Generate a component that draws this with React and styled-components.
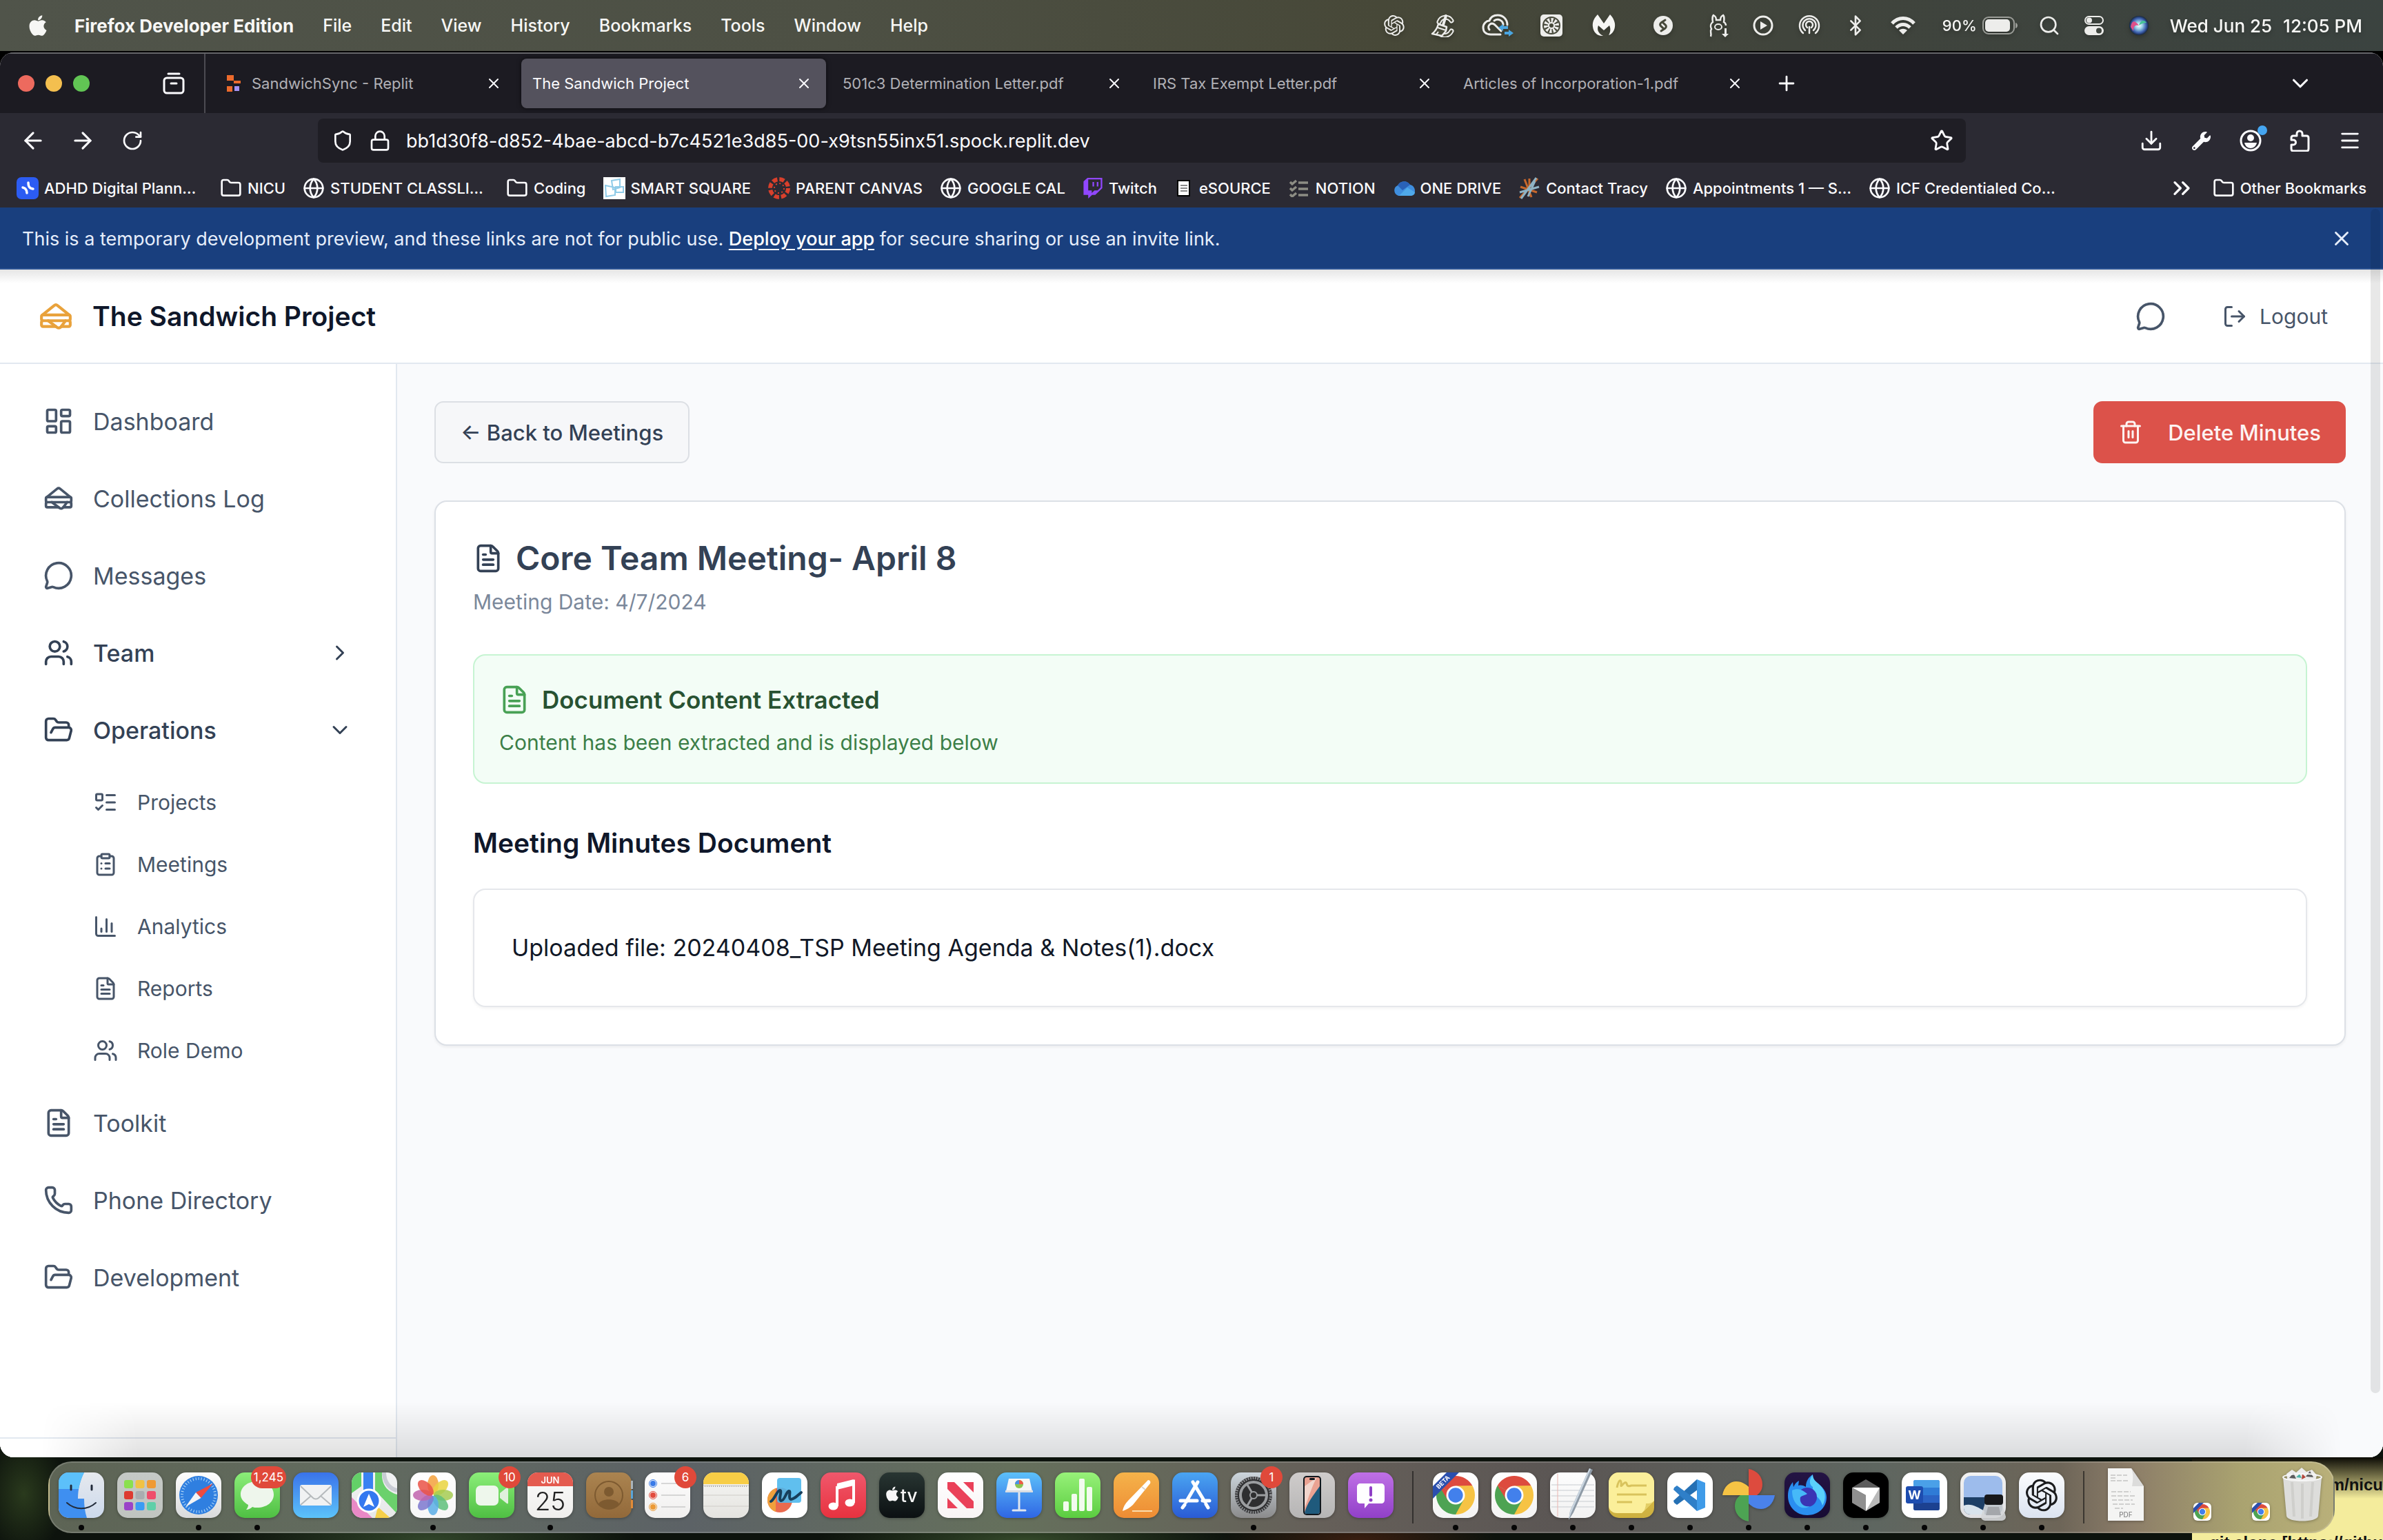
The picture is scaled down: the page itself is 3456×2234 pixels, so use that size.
import React from "react";
import styled, { createGlobalStyle, css } from "styled-components";
import {
  LayoutDashboard, Sandwich, MessageCircle, Users, FolderOpen, ListTodo, ClipboardList,
  ChartColumn, FileText, Phone, ChevronRight, ChevronDown, ChevronsRight, LogOut, Trash2,
  ArrowLeft, ArrowRight, RotateCw, Shield, Lock, Star, Download, Menu, Folder, Globe, X, Plus,
  Search, Bluetooth,
} from "lucide-react";
import { FaApple, FaTwitch, FaWrench } from "react-icons/fa";
import { RiOpenaiFill } from "react-icons/ri";

const Global = createGlobalStyle`
  *, *::before, *::after { box-sizing: border-box; }
  html, body, #root { height: 100%; margin: 0; }
  body {
    font-family: Inter, "Liberation Sans", sans-serif;
    background: #000;
    overflow: hidden;
  }
  button, input { font: inherit; color: inherit; border: 0; background: none; padding: 0; margin: 0; }
  a { color: inherit; text-decoration: none; }
  h1, h2, h3, p, ul { margin: 0; padding: 0; }
  ul { list-style: none; }
  svg { display: block; flex: none; }
`;

/* ---------- desktop ---------- */

const Desktop = styled.div`
  position: relative;
  display: flex;
  flex-direction: column;
  height: 100vh;
  overflow: hidden;
  background:
    linear-gradient(#000 0 0) top / 100% 94% no-repeat,
    radial-gradient(ellipse 60px 90px at 1% 97%, #2a3a1d, transparent),
    radial-gradient(ellipse 300px 60px at 18% 100%, #31452a, transparent),
    radial-gradient(ellipse 300px 40px at 43% 100%, #34492a, transparent),
    radial-gradient(ellipse 200px 40px at 57% 100%, #3a1e10, transparent),
    #0d130d;
`;

const MenuBar = styled.header`
  flex: none;
  height: 74px;
  padding: 0 30px 0 40px;
  display: flex;
  align-items: center;
  justify-content: space-between;
  color: #f7f7f5;
  font-size: 26px;
  background: linear-gradient(90deg, #50544a, #4d5044 35%, #474838 58%, #40443c 75%, #3b4340);
`;

const MenuGroup = styled.nav`
  display: flex;
  align-items: center;
  gap: 42px;
`;

const AppleMark = styled(FaApple)`
  width: 30px;
  height: 34px;
  margin-right: -4px;
`;

const MenuItem = styled.button`
  font-size: ${(p) => (p.$bold ? 26 : 25)}px;
  font-weight: ${(p) => (p.$bold ? 700 : 500)};
  white-space: nowrap;
`;

const StatusGroup = styled.div`
  display: flex;
  align-items: center;
  gap: 32px;
  filter: drop-shadow(0 3px 3px rgba(0, 0, 0, 0.25));
`;

const StatusSlot = styled.span`
  width: ${(p) => p.$w}px;
  display: flex;
  justify-content: center;
`;

const Battery = styled.span`
  display: flex;
  align-items: center;
  gap: 8px;
  font-size: 22px;
  font-weight: 500;
`;

const Clock = styled.time`
  display: flex;
  gap: 16px;
  font-weight: 500;
  white-space: nowrap;
`;

/* ---------- browser ---------- */

const BrowserWindow = styled.div`
  position: relative;
  flex: 1;
  min-height: 0;
  margin-top: 2px;
  display: flex;
  flex-direction: column;
  border-radius: 20px;
  overflow: hidden;
  background: #fff;
  color: #fbfbfe;
`;

const TabStrip = styled.div`
  flex: none;
  height: 88px;
  display: flex;
  align-items: center;
  background: #1c1b22;
  border-top: 2px solid #66666b;
  padding-right: 104px;
`;

const WindowControls = styled.div`
  width: 298px;
  height: 100%;
  border-right: 2px solid #4c4b52;
  padding: 0 28px 0 26px;
  display: flex;
  align-items: center;
  gap: 16px;
`;

const Light = styled.button`
  width: 24px;
  height: 24px;
  border-radius: 50%;
  background: ${(p) => p.$color};
`;

const IconButton = styled.button`
  width: ${(p) => p.$w || 72}px;
  height: 64px;
  display: flex;
  align-items: center;
  justify-content: center;
  position: relative;
`;

const Tabs = styled.div`
  display: flex;
  gap: 8px;
  margin-left: 8px;
`;

const Tab = styled.div`
  width: 442px;
  height: 72px;
  padding: 0 20px 0 ${(p) => (p.$icon ? 23 : 16)}px;
  border-radius: 8px;
  display: flex;
  align-items: center;
  gap: 16px;
  font-size: 22px;
  color: ${(p) => (p.$active ? "#fbfbfe" : "#b1b1b6")};
  background: ${(p) => (p.$active ? "#54525d" : "transparent")};
  box-shadow: ${(p) => (p.$active ? "0 0 6px rgba(0,0,0,.6)" : "none")};
  span { flex: 1; white-space: nowrap; }
  button { color: #fbfbfe; }
`;

const Spacer = styled.div`
  flex: 1;
`;

const NavBar = styled.div`
  flex: none;
  height: 80px;
  padding: 0 12px;
  display: flex;
  align-items: center;
  background: #2b2a33;
`;

const AddressBar = styled.label`
  flex: 1;
  height: 64px;
  margin: 0 233px;
  padding: 0 18px 0 20px;
  border-radius: 8px;
  display: flex;
  align-items: center;
  gap: 22px;
  background: #1f1e25;
`;

const AddressInput = styled.input`
  flex: 1;
  min-width: 0;
  font-size: 27px;
  outline: none;
`;

const AccountDot = styled.i`
  position: absolute;
  top: 10px;
  right: 12px;
  width: 14px;
  height: 14px;
  border-radius: 50%;
  background: #45a5f0;
`;

const BookmarkBar = styled.nav`
  flex: none;
  height: 57px;
  padding: 0 24px;
  display: flex;
  align-items: center;
  gap: 25px;
  background: #2b2a33;
  font-size: 22px;
  font-weight: 500;
`;

const Bookmark = styled.a`
  width: ${(p) => (p.$truncated ? "270px" : "auto")};
  display: flex;
  align-items: center;
  gap: 8px;
  white-space: nowrap;
`;

const Banner = styled.div`
  flex: none;
  height: 90px;
  padding: 2px 32px 0;
  display: flex;
  align-items: center;
  justify-content: space-between;
  background: #193f7e;
  border-bottom: 2px solid #2c5494;
  color: #e6eefb;
  font-size: 27px;
  a { color: #fff; font-weight: 500; text-decoration: underline; text-underline-offset: 5px; }
`;

/* ---------- page ---------- */

const Page = styled.div`
  flex: 1;
  min-height: 0;
  display: flex;
  flex-direction: column;
  color: #0f172a;
  background: linear-gradient(rgba(0, 0, 0, 0.1), transparent) top / 100% 20px no-repeat, #fff;
`;

const PageHeader = styled.header`
  flex: none;
  height: 137px;
  padding: 0 80px 0 56px;
  border-bottom: 2px solid #e2e8f0;
  display: flex;
  align-items: center;
  justify-content: space-between;
`;

const Brand = styled.h1`
  display: flex;
  align-items: center;
  gap: 28px;
  font-size: 39px;
  font-weight: 600;
  svg { color: #e9a23b; }
`;

const HeaderActions = styled.div`
  display: flex;
  align-items: center;
  gap: 82px;
  color: #475569;
`;

const HeaderButton = styled.button`
  display: flex;
  align-items: center;
  gap: 18px;
  font-size: 30px;
`;

const PageBody = styled.div`
  flex: 1;
  min-height: 0;
  display: flex;
`;

const Sidebar = styled.aside`
  flex: none;
  width: 576px;
  border-right: 2px solid #e2e8f0;
  background: #fff;
  display: flex;
  flex-direction: column;
  justify-content: space-between;
`;

const NavList = styled.ul`
  padding: 31px 26px;
  display: flex;
  flex-direction: column;
  gap: 8px;
`;

const NavLink = styled.a`
  height: 104px;
  padding: 0 37px;
  display: flex;
  align-items: center;
  gap: 28px;
  font-size: 34px;
  color: #475569;
  span { flex: 1; }
  ${(p) => p.$group && css`
    font-weight: 500;
    color: #334155;
  `}
`;

const SubList = styled.ul`
  padding: 12px 0 4px 109px;
  display: flex;
  flex-direction: column;
  gap: 8px;
`;

const SubLink = styled.a`
  height: 82px;
  display: flex;
  align-items: center;
  gap: 28px;
  font-size: 30px;
  color: #475569;
`;

const SidebarFoot = styled.div`
  height: 29px;
  border-top: 2px solid #e2e8f0;
`;

const Main = styled.main`
  flex: 1;
  padding: 54px;
  background: #f9fafc;
  display: flex;
  flex-direction: column;
  gap: 54px;
`;

const Actions = styled.div`
  display: flex;
  justify-content: space-between;
`;

const ActionButton = styled.button`
  height: 90px;
  padding: 0 36px;
  border-radius: 13px;
  display: flex;
  align-items: center;
  font-size: 31px;
  font-weight: 500;
  ${(p) => (p.$danger ? css`
    gap: 36px;
    color: #fdf3f2;
    background: #dc524a;
  ` : css`
    color: #334155;
    background: #f6f7f9;
    border: 2px solid #dcdfe4;
  `)}
`;

const Card = styled.section`
  border: 2px solid #dce0e6;
  border-radius: 18px;
  background: #fff;
  padding: 54px;
  box-shadow: 0 2px 4px rgba(0, 0, 0, 0.06);
`;

const CardTitle = styled.h2`
  display: flex;
  align-items: center;
  gap: 18px;
  font-size: 48px;
  line-height: 56px;
  font-weight: 600;
  color: #334155;
`;

const Muted = styled.p`
  margin-top: 13px;
  font-size: 30px;
  line-height: 44px;
  color: #7b889b;
`;

const Notice = styled.div`
  margin-top: 54px;
  padding: 36px;
  border: 2px solid #c6f4d2;
  border-radius: 18px;
  background: #f3fdf6;
`;

const NoticeTitle = styled.h3`
  display: flex;
  align-items: center;
  gap: 18px;
  font-size: 35px;
  line-height: 56px;
  font-weight: 600;
  color: #285232;
  svg { color: #48a155; }
`;

const NoticeText = styled.p`
  margin-top: 12px;
  font-size: 30px;
  line-height: 44px;
  color: #3c7f48;
`;

const SectionTitle = styled.h3`
  margin: 58px 0 38px;
  font-size: 39px;
  line-height: 56px;
  font-weight: 600;
`;

const FileBox = styled.div`
  padding: 54px;
  border: 2px solid #e5e7eb;
  border-radius: 18px;
  box-shadow: 0 2px 4px rgba(0, 0, 0, 0.05);
  font-size: 34px;
  line-height: 60px;
  color: #111827;
`;

const ScrollThumb = styled.div`
  position: absolute;
  top: 227px;
  right: 4px;
  bottom: 93px;
  width: 14px;
  border-radius: 7px;
  background: rgba(0, 0, 0, 0.09);
`;

const BottomShade = styled.div`
  position: absolute;
  left: 60px;
  right: 60px;
  bottom: 0;
  height: 80px;
  background: linear-gradient(transparent, rgba(0, 0, 0, 0.12));
  mask-image: linear-gradient(90deg, transparent, #000 140px calc(100% - 140px), transparent);
`;

/* ---------- dock ---------- */

const StickyNote = styled.div`
  position: absolute;
  right: 0;
  bottom: 0;
  width: 277px;
  height: 120px;
  overflow: hidden;
  color: #111;
  font: 700 24px "Liberation Sans", Arial, sans-serif;
  white-space: nowrap;
  display: flex;
  flex-direction: column;
  align-items: flex-end;
  justify-content: space-between;
  padding-top: 26px;
  background: linear-gradient(#0c0b05, rgba(12, 11, 5, 0) 60px), #f4ec9c;
`;

const StickyLine = styled.span`
  height: 26px;
  margin-bottom: ${(p) => (p.$last ? -16 : 0)}px;
`;

const DockArea = styled.footer`
  position: relative;
  flex: none;
  height: 120px;
  padding: 6px 0 10px;
  display: flex;
  justify-content: center;
`;

const Dock = styled.div`
  display: flex;
  padding: 0 3px;
  border: 2px solid rgba(255, 255, 255, 0.16);
  border-radius: 34px;
  background: linear-gradient(90deg, #5d6455, #626b5e 12%, #5c6266 28%, #65705c 42%, #655f59 56%, #5b5654 66%, #5e6660 80%, #6d6558 88%, #8b7c68 91%, #aaa370 96%, #b9b07a);
`;

const DockItem = styled.button`
  width: 85px;
  padding-top: 14px;
  display: flex;
  flex-direction: column;
  align-items: center;
  gap: 10px;
  position: relative;
  > svg { height: 66px; overflow: visible; filter: drop-shadow(0 1px 2px rgba(0, 0, 0, 0.3)); }
`;

const RunningDot = styled.i`
  width: 8px;
  height: 8px;
  border-radius: 50%;
  background: #060606;
`;

const Badge = styled.span`
  position: absolute;
  top: 5px;
  right: 0;
  min-width: 32px;
  height: 32px;
  padding: 0 4px;
  border-radius: 16px;
  background: #e0493a;
  color: #fff;
  font-size: 17px;
  line-height: 32px;
  text-align: center;
`;

const DockRule = styled.i`
  width: 2px;
  height: 76px;
  margin: 12px 18px 0;
  background: rgba(20, 20, 20, 0.6);
`;

/* ---------- drawings ---------- */

const Svg = ({ w = 66, h = w, box = `0 0 ${w} ${h}`, children, ...rest }) => (
  <svg width={w} height={h} viewBox={box} fill="none" aria-hidden="true" {...rest}>{children}</svg>
);

const Tile = ({ id, from, to = from, children }) => (
  <Svg w={66}>
    <defs>
      <linearGradient id={id} x1="0" y1="0" x2="0" y2="1">
        <stop stopColor={from} />
        <stop offset="1" stopColor={to} />
      </linearGradient>
      <clipPath id={`${id}-clip`}><rect width="66" height="66" rx="15" /></clipPath>
    </defs>
    <rect width="66" height="66" rx="15" fill={`url(#${id})`} />
    {children}
  </Svg>
);

const polar = (cx, cy, r, deg) => {
  const a = (deg * Math.PI) / 180;
  return `${(cx + r * Math.cos(a)).toFixed(2)} ${(cy + r * Math.sin(a)).toFixed(2)}`;
};

const ChromeDisc = ({ cx = 33, cy = 33, r = 28 }) => (
  <g>
    {[["#dd4b3e", 210], ["#f6c344", 330], ["#4da353", 90]].map(([c, a]) => (
      <path key={c} fill={c} d={`M${cx} ${cy}L${polar(cx, cy, r, a)}A${r} ${r} 0 0 1 ${polar(cx, cy, r, a + 120)}Z`} />
    ))}
    <path fill="#dd4b3e" d={`M${polar(cx, cy, r, 210)}L${polar(cx, cy, r * 0.48, 150)}L${cx} ${cy}Z`} />
    <path fill="#f6c344" d={`M${polar(cx, cy, r, 330)}L${polar(cx, cy, r * 0.48, 270)}L${cx} ${cy}Z`} />
    <path fill="#4da353" d={`M${polar(cx, cy, r, 90)}L${polar(cx, cy, r * 0.48, 30)}L${cx} ${cy}Z`} />
    <circle cx={cx} cy={cy} r={r * 0.48} fill="#fff" />
    <circle cx={cx} cy={cy} r={r * 0.38} fill="#4280ec" />
  </g>
);

const Finder = () => (
  <Tile id="finder" from="#e6e9ee" to="#ccd9ec">
    <g clipPath="url(#finder-clip)">
      <path d="M0 0h37c-6 12-9 24-9 38h9c0 10 1 19 4 28H0z" fill="#3f8ff0" />
      <path d="M0 0h37c-4 8-6 15-8 24H0z" fill="#5cc0fa" />
    </g>
    <path d="M18 19v6M48 19v6" stroke="#222b3a" strokeWidth="3" strokeLinecap="round" />
    <path d="M12 44c12 11 30 11 42 0" stroke="#222b3a" strokeWidth="2" strokeLinecap="round" />
  </Tile>
);

const Launchpad = () => (
  <Tile id="launchpad" from="#c5c9c6" to="#c0c4c0">
    {["#8ae04e", "#f0c244", "#ef9a35", "#dd3b30", "#a9adb0", "#ef4e6b", "#9a44c8", "#3a9cf4", "#5fcfa8"].map((c, i) => (
      <rect key={c} x={10 + (i % 3) * 16.5} y={11 + Math.floor(i / 3) * 16} width="13" height="12" rx="3" fill={c} />
    ))}
  </Tile>
);

const Safari = () => (
  <Tile id="safari" from="#fdfdfd" to="#d9dadb">
    <circle cx="33" cy="33" r="28" fill="#2f7fe0" />
    <circle cx="33" cy="33" r="24" stroke="#b9dcf8" strokeWidth="4" strokeDasharray="1 3" />
    <path d="M54 16 36.500 37 29 29z" fill="#ee4b3e" />
    <path d="M14 50 29 29l7.500 8z" fill="#f3f4f6" />
  </Tile>
);

const Messages = () => (
  <Tile id="messages" from="#8bee79" to="#4fbf43">
    <path d="M33 13c14 0 24 8 24 19S47 51 33 51c-3 0-5 0-7-1-2 2-6 4-9 4 2-2 3-5 3-7-7-4-11-9-11-15 0-11 10-19 24-19z" fill="#eef6ec" />
  </Tile>
);

const Mail = () => (
  <Tile id="mail" from="#3a73ea" to="#5cc3fa">
    <rect x="10" y="18" width="46" height="30" rx="3" fill="#f1f2f3" />
    <path d="M11 20l18 17c2 2 6 2 8 0l18-17M11 47l15-13M55 47L40 34" stroke="#b6babd" strokeWidth="2" />
  </Tile>
);

const Maps = () => (
  <Tile id="maps" from="#f2f3f4" to="#e6e7e8">
    <g clipPath="url(#maps-clip)">
      <path d="M0 0h14v20L0 30z" fill="#63d068" /><path d="M34 0h10c-1 18 8 28 22 32v28L34 26z" fill="#6bd16c" />
      <path d="M0 36 30 66H0z" fill="#e989c6" /><path d="M38 50 56 66H34z" fill="#f5cf4a" />
      <path d="M47 0c0 14 8 24 19 26" stroke="#c9ccd4" strokeWidth="6" />
      <path d="M17 0h14v40H17z" fill="#3a82f2" />
    </g>
    <circle cx="25" cy="41" r="16" fill="#3478f0" stroke="#fff" strokeWidth="3" />
    <path d="M25 31l8 19-8-4-8 4z" fill="#fff" />
  </Tile>
);

const Photos = () => (
  <Tile id="photos" from="#ffffff" to="#f6f6f6">
    {["#f3a13c", "#e9d33f", "#a4cb51", "#5fbf7b", "#5aaee6", "#7c78cf", "#c164ae", "#ea5247"].map((c, i) => (
      <ellipse key={c} cx="33" cy="18" rx="8" ry="14" fill={c} opacity="0.85" transform={`rotate(${i * 45} 33 33)`} />
    ))}
  </Tile>
);

const FaceTime = () => (
  <Tile id="facetime" from="#8bee79" to="#4fbf43">
    <rect x="10" y="19" width="33" height="29" rx="7" fill="#eef7ec" />
    <path d="M45 30l10-8c1-1 2 0 2 1v21c0 1-1 2-2 1l-10-8z" fill="#e0f0dd" />
  </Tile>
);

const Calendar = () => (
  <Tile id="calendar" from="#fbfbfa" to="#efeeec">
    <path d="M0 20V15A15 15 0 0 1 15 0h36a15 15 0 0 1 15 15v5z" fill="#e45b4f" />
    <text x="33" y="16" fontSize="13" fontWeight="600" textAnchor="middle" fill="#fff">JUN</text>
    <text x="33" y="55" fontSize="37" fontWeight="300" textAnchor="middle" fill="#222">25</text>
  </Tile>
);

const Contacts = () => (
  <Tile id="contacts" from="#ab8450" to="#92693a">
    <path d="M65 12h3v12h-3z" fill="#a9b4bb" /><path d="M65 26h3v12h-3z" fill="#59a4d8" /><path d="M65 40h3v12h-3z" fill="#e28b38" />
    <circle cx="33" cy="33" r="20" stroke="#7d5a30" strokeWidth="2" />
    <circle cx="33" cy="28" r="7" fill="#7d5a30" />
    <path d="M18 46c3-9 27-9 30 0-8 9-22 9-30 0z" fill="#7d5a30" />
  </Tile>
);

const Reminders = () => (
  <Tile id="reminders" from="#fdfdfd" to="#f0efee">
    {["#3a7be8", "#e24b3d", "#ec9a35"].map((c, i) => (
      <g key={c}>
        <circle cx="12" cy={16 + i * 17} r="5.500" stroke={c} strokeWidth="1" />
        <circle cx="12" cy={16 + i * 17} r="4" fill={c} />
        <path d={`M24 ${16 + i * 17}h35`} stroke="#b5b5b5" strokeWidth="1" />
      </g>
    ))}
  </Tile>
);

const Notes = () => (
  <Tile id="notes" from="#f7f7f5" to="#e4e3df">
    <path d="M0 17v-2A15 15 0 0 1 15 0h36a15 15 0 0 1 15 15v2z" fill="#f7cd46" />
    <path d="M0 19h66M0 33h66M0 49h66" stroke="#cfcdc8" strokeWidth="1" />
    <path d="M2 20h62" stroke="#a9a7a2" strokeWidth="2" strokeDasharray="1 2" />
  </Tile>
);

const Freeform = () => (
  <Tile id="freeform" from="#ffffff">
    <circle cx="26" cy="40" r="18" fill="#ea6a4e" /><path d="M8 40a18 18 0 0 1 12-17v34A18 18 0 0 1 8 40z" fill="#f0a03c" />
    <rect x="22" y="8" width="35" height="36" rx="4" fill="#4fb8ec" fillOpacity="0.9" />
    <path d="M13 42c5-2 9-16 13-16s-3 14 2 15c5 0 7-13 11-14 4 0-2 11 3 12 4 0 8-4 15-10" stroke="#173f5c" strokeWidth="4" strokeLinecap="round" />
  </Tile>
);

const Music = () => (
  <Tile id="music" from="#f0586c" to="#e8323f">
    <path d="M24 20l24-7v31M24 20v29" stroke="#fff" strokeWidth="4" /><path d="M24 16l24-6v9l-24 6z" fill="#fff" />
    <ellipse cx="18.500" cy="49" rx="7" ry="5.500" fill="#fff" /><ellipse cx="42.500" cy="44" rx="7" ry="5.500" fill="#fff" />
  </Tile>
);

const AppleTv = () => (
  <Tile id="tv" from="#283532" to="#0b1012">
    <FaApple x="7" y="19" size={24} color="#f7f7f7" />
    <text x="31" y="43" fontSize="26" fontWeight="500" fill="#f7f7f7">tv</text>
  </Tile>
);

const News = () => (
  <Tile id="news" from="#ffffff" to="#f8f4f5">
    <path d="M14 14h10l28 28v10H42L14 24z" fill="#ea4159" /><path d="M37 14h15v15zM14 37v15h15z" fill="#ea4159" />
  </Tile>
);

const Keynote = () => (
  <Tile id="keynote" from="#5cc0fa" to="#2f66e4">
    <path d="M33 28v26M24 55h18" stroke="#dfe6ef" strokeWidth="3" strokeLinecap="round" />
    <path d="M18 9h30l4 18H14z" fill="#f5f6f7" />
    <path d="M13 26h40v3H13z" fill="#d9dde2" />
    <circle cx="33" cy="17" r="6" fill="#8bc453" /><path d="M33 17v-6a6 6 0 0 1 6 6z" fill="#ee5a48" /><path d="M33 17h-6a6 6 0 0 1 6-6z" fill="#4a90e8" />
  </Tile>
);

const Numbers = () => (
  <Tile id="numbers" from="#97f179" to="#5bcd40">
    {[[12, 42, 14], [24, 31, 25], [35, 9, 47], [46, 21, 35]].map(([x, y, h]) => (
      <rect key={x} x={x} y={y} width="8" height={h} rx="2" fill="#f2fbee" />
    ))}
  </Tile>
);

const Pages = () => (
  <Tile id="pages" from="#f5b34a" to="#ee8c34">
    <path d="M50 11c3 0 4 3 3 5L28 47c-4 4-9 7-15 9 1-6 4-11 8-15z" fill="#fff" />
    <path d="M41 21l5 4" stroke="#d9d3cc" strokeWidth="2" /><path d="M27 56h29" stroke="#fbdcae" strokeWidth="2" />
  </Tile>
);

const AppStore = () => (
  <Tile id="appstore" from="#4aa5f2" to="#2a5bd4">
    <path d="M37 14L20 43M30 14l17 28M12 41h24M44 41h10M18 47l-3 4M49 46l3 5" stroke="#fff" strokeWidth="5" strokeLinecap="round" />
  </Tile>
);

const Settings = () => (
  <Tile id="settings" from="#ccd5dc" to="#8b8b8c">
    <circle cx="33" cy="33" r="27" fill="#2e2e30" />
    <circle cx="33" cy="33" r="25" stroke="#85878a" strokeWidth="4" strokeDasharray="2 1.500" />
    <circle cx="33" cy="33" r="19" stroke="#9b9da0" strokeWidth="4" />
    <path d="M33 33h17M33 33l-9-15M33 33l-9 15" stroke="#9b9da0" strokeWidth="3" />
    <circle cx="33" cy="33" r="5" fill="#2e2e30" stroke="#9b9da0" strokeWidth="2" />
  </Tile>
);

const PhoneMirror = () => (
  <Tile id="mirror" from="#cfcccb" to="#b6b5b5">
    <rect x="20" y="5" width="26" height="57" rx="5" fill="#10171d" />
    <rect x="22" y="7" width="22" height="53" rx="3" fill="#eaa292" />
    <path d="M44 20C34 34 26 44 22 58c0 1 1 2 3 2h16c2 0 3-1 3-3z" fill="#1f5a7c" />
    <path d="M40 7c-8 14-12 30-18 44V20z" fill="#f2d5cc" /><rect x="29" y="8" width="8" height="3" rx="1.500" fill="#10171d" />
  </Tile>
);

const Feedback = () => (
  <Tile id="feedback" from="#bf70e6" to="#9140c8">
    <path d="M18 16h30c3 0 5 2 5 5v19c0 3-2 5-5 5H30l-6 7v-7h-6c-3 0-5-2-5-5V21c0-3 2-5 5-5z" fill="#fff" />
    <path d="M33 22v11" stroke="#8f3fc6" strokeWidth="4" strokeLinecap="round" /><circle cx="33" cy="40" r="2.500" fill="#8f3fc6" />
  </Tile>
);

const Chrome = () => <Tile id="chrome" from="#ffffff" to="#f3f3f3"><ChromeDisc /></Tile>;

const ChromeBeta = () => (
  <Tile id="chromebeta" from="#ffffff" to="#f3f3f3">
    <ChromeDisc />
    <g clipPath="url(#chromebeta-clip)"><path d="M0 20L20 0h18L0 38z" fill="#2b4fae" /></g>
    <text x="15" y="17" fontSize="9" fontWeight="700" textAnchor="middle" fill="#fff" transform="rotate(-45 15 14)">BETA</text>
  </Tile>
);

const TextEdit = () => (
  <Tile id="textedit" from="#fdfdfd" to="#f2f2f2">
    <path d="M2 18h62M2 26h62M2 34h62M2 42h62M2 50h62" stroke="#c7cbd0" strokeWidth="1" /><path d="M11 2v62" stroke="#eab5b0" />
    <path d="M57-6l5 2L34 58l-7 11 2-13z" fill="#8e9aa6" /><path d="M57-6l2 1L31 58l-4 11 2-13z" fill="#c9d5e0" />
  </Tile>
);

const Stickies = () => (
  <Tile id="stickies" from="#dcc24f" to="#cdb03f">
    <path d="M0 15A15 15 0 0 1 15 0h36a15 15 0 0 1 15 15v26L48 59H12C5 59 0 54 0 48z" fill="#fbef9a" />
    <path d="M66 41c-4 5-12 4-12 4s0 10-6 14z" fill="#e3cf66" />
    <path d="M12 22c3-14 7-12 6-4-1 6 6-8 8-2 1 5 4 4 7 3h22M12 32h43M12 43h22" stroke="#d9c35c" strokeWidth="3" />
  </Tile>
);

const VsCode = () => (
  <Tile id="vscode" from="#ffffff">
    <path d="M43 10 9 41l1 3 4 3L44 25z" fill="#2570b4" /><path d="M43 56 9 25l1-3 4-3 30 22z" fill="#2f7fc8" />
    <path d="M43 10l12 5v36l-12 5z" fill="#3f9be8" />
  </Tile>
);

const GooglePhotos = () => (
  <Svg w={76} h={66} box="-5 0 76 66">
    <path d="M33-5c13 2 20 12 20 22 0 8-3 12-8 16H33z" fill="#dd4b3e" />
    <path d="M71 33c-2 13-11 20-20 20S36 48 33 45V33z" fill="#4a82ea" />
    <path d="M33 71C20 69 13 59 13 49c0-8 3-12 8-16h12z" fill="#4da353" />
    <path d="M-5 33c2-13 11-20 20-20s15 5 18 8v12z" fill="#f6c344" />
  </Svg>
);

const FirefoxDev = () => (
  <Tile id="firefox" from="#241444" to="#170b33">
    <path d="M33 62C17 62 5 50 5 34c0-9 3-15 7-20l1 7c2-4 4-7 8-9l-1 7c5-1 8 0 11 2 0-9 4-14 10-18 0 8 5 10 10 15 7 6 10 12 10 18 0 15-12 26-28 26z" fill="#2a8ef0" />
    <path d="M41 3c0 8 5 10 10 15 9 8 10 20 4 30-3-14-15-13-14-27-5-3-6-10 0-18z" fill="#5ad0fb" />
    <circle cx="33" cy="36" r="14" fill="#3a35b4" /><path d="M11 26c6-3 13-2 18 2l4 3c-3 2-7 2-10 5-2 8 5 15 14 13-12 7-26-2-26-23z" fill="#46b9f8" />
  </Tile>
);

const Cursor = () => (
  <Tile id="cursor" from="#000000">
    <path d="M33 10l20 12H13z" fill="#5c5c5c" />
    <path d="M13 22v22l20 12V33z" fill="#8f8f8f" />
    <path d="M53 22v22L33 56V33z" fill="#b9b9b9" />
    <path d="M13 22h40L33 56V33z" fill="#fff" />
  </Tile>
);

const Word = () => (
  <Tile id="word" from="#ffffff">
    <rect x="17" y="11" width="38" height="44" rx="3" fill="#2b63c4" /><path d="M17 14c0-2 1-3 3-3h32c2 0 3 1 3 3v8H17z" fill="#4aa0e8" /><path d="M17 22h38v11H17z" fill="#2f7bd6" /><path d="M17 44h38v8c0 2-1 3-3 3H20c-2 0-3-1-3-3z" fill="#1c4190" />
    <rect x="6" y="20" width="25" height="25" rx="3" fill="#1d4db0" />
    <text x="18.500" y="39" fontSize="18" fontWeight="700" textAnchor="middle" fill="#fff">W</text>
  </Tile>
);

const Preview = () => (
  <Tile id="preview" from="#f2f2f2" to="#dfdfe2">
    <rect x="5" y="5" width="56" height="56" rx="10" fill="#9dbcec" />
    <path d="M5 36h56v15c0 6-4 10-10 10H15C9 61 5 57 5 51z" fill="#1d3f66" /><path d="M5 48c10-4 20 2 30 8v5H15C9 61 5 57 5 51z" fill="#d8e3ec" />
    <path d="M36 44h24l6 20c0 4-3 6-8 6H38c-5 0-8-2-8-6z" fill="#d4d6d8" fillOpacity="0.9" /><rect x="35" y="32" width="27" height="15" rx="4" fill="#17181b" />
    <path d="M40 50h16l3 12H37z" fill="#a4a7ab" />
  </Tile>
);

const ChatGpt = () => (
  <Tile id="chatgpt" from="#fbfcfe" to="#dbe3f0"><RiOpenaiFill x="5" y="5" size={56} color="#1b1c1e" /></Tile>
);

const PdfFile = () => (
  <Svg w={54} h={66} box="0 6 54 66">
    <path d="M0 0h34l18 26v50H0z" fill="#f4f4f3" /><path d="M34 0c3 8 3 16 1 26h17z" fill="#dcdcdb" />
    <path d="M4 10h24M4 14h8M4 18h26M5 34h28M5 40h34M6 46h30M7 52h32M10 58h12" stroke="#c4c4c3" strokeWidth="1.500" strokeDasharray="7 2" />
    <text x="26" y="71" fontSize="10" textAnchor="middle" fill="#777">PDF</text>
  </Svg>
);

const MiniChrome = () => (
  <Svg w={66}>
    <rect x="45" y="44" width="26" height="26" rx="6" fill="#fff" /><ChromeDisc cx={58} cy={57} r={11} />
    <path d="M45 52l8-8h7L45 59z" fill="#2b4fae" />
  </Svg>
);

const Trash = () => (
  <Svg w={58} h={66} box="0 6 58 66">
    <path d="M6 8l8-6 6 4 8-7 7 6 8-3 7 8-3 12H8z" fill="#ececec" />
    <path d="M10 14l6-7 4 8zM34 12l6-8 5 9z" fill="#5b5b5d" /><path d="M20 13l5-5 3 6z" fill="#4db3a8" /><path d="M29 8l5 5-6 3z" fill="#b3453a" />
    <path d="M1 13c14 7 42 7 56 0l-5 56c-1 10-45 10-46 0z" fill="#dddddb" /><path d="M14 20l3 50M29 22v51M44 20l-3 50" stroke="#cfcfcc" strokeWidth="4" />
    <ellipse cx="29" cy="13" rx="28" ry="5" stroke="#f6f6f6" strokeWidth="2" />
  </Svg>
);

/* menu bar glyphs */

const CleanerGlyph = () => (
  <Svg w={36} h={34}>
    <path d="M30 10a10 10 0 0 0-18 2M15 30c6 3 12 1 15-5" stroke="#ededeb" strokeWidth="7" strokeLinecap="round" />
    <path d="M30 10a10 10 0 0 0-18 2M15 30c6 3 12 1 15-5" stroke="#474838" strokeWidth="3" strokeLinecap="round" />
    <path d="M22 3l-4 13" stroke="#ededeb" strokeWidth="4" strokeLinecap="round" />
    <path d="M11 15l12 4-1 6-6 7-14-3c4-3 7-7 9-14z" fill="#474838" stroke="#ededeb" strokeWidth="2.500" strokeLinejoin="round" />
    <path d="M10 20l12 4M11 26l-3 4" stroke="#ededeb" strokeWidth="2" />
  </Svg>
);
const CloudGlyph = () => (
  <Svg w={46} h={34}>
    <path d="M13 30C6 30 2 26 2 20s5-10 9-10c2-6 7-8 12-8 8 0 14 6 14 14M13 30h14M11 23c-4-5 2-12 8-7l9 9M18 10c6-4 13 0 13 6" stroke="#ededeb" strokeWidth="3" strokeLinecap="round" />
    <path d="M24 20l7-5v3h7v4h-7v3zM46 28l-7-5v3h-6v4h6v3z" fill="#4aa5e0" />
  </Svg>
);
const DialGlyph = () => (
  <Svg w={34}>
    <rect x="1" y="1" width="32" height="32" rx="5" fill="#ededeb" /><circle cx="17" cy="17" r="12" stroke="#46483a" strokeWidth="2" /><circle cx="17" cy="17" r="8" stroke="#46483a" strokeWidth="6" strokeDasharray="2 3" /><circle cx="17" cy="17" r="3" fill="#46483a" />
  </Svg>
);
const MGlyph = () => (
  <Svg w={34}><path d="M8 1l9 13 9-13c5 5 8 12 7 18-1 7-5 11-9 12 3-5 3-10 1-14l-8 7-8-7c-2 5-1 11 7 15-8 1-14-5-15-13C0 12 3 6 8 1z" fill="#f6f6f4" /></Svg>
);
const ShazamGlyph = () => (
  <Svg w={30}><circle cx="15" cy="15" r="14" fill="#ededeb" /><path d="M18 7l-6 4c-4 4 2 6 3 8M12 23l6-4c4-4-2-6-3-8" stroke="#46483a" strokeWidth="3" strokeLinecap="round" /></Svg>
);
const LlamaGlyph = () => (
  <Svg w={32} h={34}><path d="M4 33c2-5-2-7 1-11-2-4-1-8 2-10-1-5 0-9 1-10 2 1 4 4 4 7h6c0-3 2-6 4-7 1 1 2 5 1 10 2 1 3 3 3 5" stroke="#ededeb" strokeWidth="2.500" /><ellipse cx="15" cy="19" rx="5" ry="4" stroke="#ededeb" strokeWidth="2" /><path d="M27 21v8h3l-5 5-5-5h4v-8z" fill="#ededeb" /></Svg>
);
const PlayGlyph = () => (
  <Svg w={30}><circle cx="15" cy="15" r="13" stroke="#ededeb" strokeWidth="3" /><path d="M11 9l10 6-10 6z" fill="#ededeb" /></Svg>
);
const CastGlyph = () => (
  <Svg w={32}><path d="M7 27a14 14 0 1 1 18 0M10 23a9.500 9.500 0 1 1 12 0M13 19a5 5 0 1 1 6 0M16 18v9" stroke="#ededeb" strokeWidth="2.500" strokeLinecap="round" /></Svg>
);
const WifiGlyph = () => (
  <Svg w={36} h={28}><path d="M2 11c9-10 23-10 32 0M8 17c6-6 14-6 20 0" stroke="#ededeb" strokeWidth="5" /><path d="M12 21c4-3 8-3 12 0l-6 6z" fill="#ededeb" /></Svg>
);
const BatteryGlyph = () => (
  <Svg w={52} h={26}><rect x="1" y="1" width="45" height="24" rx="8" stroke="#9b9d98" strokeWidth="2" /><rect x="4" y="4" width="36" height="18" rx="5" fill="#ededeb" /><path d="M48 9c4 1 4 7 0 8z" fill="#9b9d98" /></Svg>
);
const ControlGlyph = () => (
  <Svg w={28}><rect x="1" y="1" width="26" height="11" rx="5.500" stroke="#ededeb" strokeWidth="2" /><circle cx="7" cy="6.500" r="4" fill="#ededeb" /><rect y="15" width="28" height="13" rx="6.500" fill="#ededeb" /><circle cx="21" cy="21.500" r="4" fill="#3e443e" /></Svg>
);
const SiriGlyph = () => (
  <Svg w={28}>
    <defs><radialGradient id="siri"><stop stopColor="#fff" /><stop offset="0.350" stopColor="#9fd4e8" /><stop offset="0.750" stopColor="#3c5fae" /><stop offset="1" stopColor="#17273f" /></radialGradient></defs>
    <circle cx="14" cy="14" r="14" fill="url(#siri)" /><path d="M2 16C4 6 8 6 14 14 8 12 6 16 6 22z" fill="#e0508a" /><path d="M14 14c2-8 8-9 11-4-4 0-7 1-11 4z" fill="#46c497" />
  </Svg>
);

/* browser glyphs */

const FirefoxViewGlyph = () => (
  <Svg w={32}><path d="M8 2h16" stroke="#fbfbfe" strokeWidth="3" strokeLinecap="round" /><rect x="2" y="8" width="28" height="22" rx="4" stroke="#fbfbfe" strokeWidth="3" /><path d="M12 16h8" stroke="#fbfbfe" strokeWidth="3" strokeLinecap="round" /></Svg>
);
const ReplitGlyph = () => (
  <Svg w={20} h={24}><path d="M0 0h10v8H0zM10 8h10v4H10zM0 16h8v8H0z" fill="#ec6a2c" /><path d="M11 16h7v7h-7z" fill="#a492f4" /></Svg>
);
const AccountGlyph = () => (
  <Svg w={32}><circle cx="16" cy="16" r="14" stroke="#fbfbfe" strokeWidth="3" /><circle cx="16" cy="12" r="5" fill="#fbfbfe" /><path d="M7 19h18c-1 5-5 8-9 8s-8-3-9-8z" fill="#fbfbfe" /></Svg>
);
const ExtensionsGlyph = () => (
  <Svg w={32}><path d="M11 9V6a4 4 0 0 1 8 0v3h6c2 0 3 1 3 3v16c0 2-1 3-3 3H6c-2 0-3-1-3-3v-6h3a3.500 3.500 0 0 0 0-7H3v-3c0-2 1-3 3-3z" stroke="#fbfbfe" strokeWidth="3" strokeLinejoin="round" /></Svg>
);
const PlannerIcon = () => (
  <Svg w={32}><rect width="32" height="32" rx="7" fill="#2c5cf2" /><path d="M9 15c5 1 6 4 6 8M17 8c0 5 1 8 7 9" stroke="#fff" strokeWidth="3.500" strokeLinecap="round" /></Svg>
);
const SquareIcon = () => (
  <Svg w={32}><rect width="32" height="32" fill="#fff" /><path d="M12 5l12-2v12l-10 3zM3 12l14 3v11L4 28zM18 14h11v8H18z" stroke="#8fcbe8" strokeWidth="2" /></Svg>
);
const CanvasIcon = () => (
  <Svg w={32}><circle cx="16" cy="16" r="13" stroke="#d8402c" strokeWidth="6" strokeDasharray="7.200 3" /><circle cx="16" cy="16" r="7" stroke="#d8402c" strokeWidth="2" strokeDasharray="2 3.500" /></Svg>
);
const SourceIcon = () => (
  <Svg w={28} h={24}><rect x="5" y="1" width="17" height="22" fill="#fff" stroke="#000" strokeWidth="2" /><path d="M9 8h10M9 12h10M9 16h10" stroke="#8a8a8a" strokeWidth="2" /></Svg>
);
const TasksIcon = () => (
  <Svg w={32} h={26}><path d="M3 4l3 3 6-5M3 13l3 3 6-5M3 22l3 3 6-5M15 5h14M15 14h14M15 23h14" stroke="#8d8d84" strokeWidth="3.500" /></Svg>
);
const DriveIcon = () => (
  <Svg w={32} h={22}><path d="M8 22a8 8 0 0 1-1-15C10 1 20-2 25 6c5 1 7 5 7 9s-3 7-7 7z" fill="#3f8ede" /><path d="M7 7C10 1 20-2 25 6l-11 8z" fill="#2a62b8" /><path d="M9 22l12-12 11 7c0 3-3 5-7 5z" fill="#4fa9ea" /></Svg>
);
const StarburstIcon = () => (
  <Svg w={32}><path d="M2 30L28 2M3 14l24 8M9 3l10 26M16 2v26" stroke="#c8682c" strokeWidth="3" /><path d="M4 31L26 1M2 22l28-8M14 28L24 6" stroke="#8fb3c4" strokeWidth="3" /></Svg>
);

/* ---------- content ---------- */

const menus = ["File", "Edit", "View", "History", "Bookmarks", "Tools", "Window", "Help"];

const glyph = "#ededeb";
const statusItems = [
  ["ChatGPT", 38, <RiOpenaiFill size={36} color={glyph} />],
  ["Cleaner", 40, <CleanerGlyph />],
  ["Creative Cloud", 54, <CloudGlyph />],
  ["Dial", 38, <DialGlyph />],
  ["Malwarebytes", 50, <MGlyph />],
  ["Shazam", 58, <ShazamGlyph />],
  ["Ollama", 40, <LlamaGlyph />],
  ["Now Playing", 24, <PlayGlyph />],
  ["AirPlay", 46, <CastGlyph />],
  ["Bluetooth", 24, <Bluetooth size={32} color={glyph} strokeWidth={2} />],
  ["Wi-Fi", 50, <WifiGlyph />],
];

const tabs = [
  { title: "SandwichSync - Replit", icon: <ReplitGlyph /> },
  { title: "The Sandwich Project", active: true },
  { title: "501c3 Determination Letter.pdf" },
  { title: "IRS Tax Exempt Letter.pdf" },
  { title: "Articles of Incorporation-1.pdf" },
];

const folder = <Folder size={32} strokeWidth={2} />;
const globe = <Globe size={32} strokeWidth={2} />;
const bookmarks = [
  ["ADHD Digital Plann…", <PlannerIcon />],
  ["NICU", folder],
  ["STUDENT CLASSLI…", globe],
  ["Coding", folder],
  ["SMART SQUARE", <SquareIcon />],
  ["PARENT CANVAS", <CanvasIcon />],
  ["GOOGLE CAL", globe],
  ["Twitch", <FaTwitch size={30} color="#9147ff" />],
  ["eSOURCE", <SourceIcon />],
  ["NOTION", <TasksIcon />],
  ["ONE DRIVE", <DriveIcon />],
  ["Contact Tracy", <StarburstIcon />],
  ["Appointments 1 — S…", globe],
  ["ICF Credentialed Co…", globe],
];

const nav = [
  { label: "Dashboard", Icon: LayoutDashboard },
  { label: "Collections Log", Icon: Sandwich },
  { label: "Messages", Icon: MessageCircle },
  { label: "Team", Icon: Users, group: true },
  {
    label: "Operations", Icon: FolderOpen, group: true, items: [
      { label: "Projects", Icon: ListTodo },
      { label: "Meetings", Icon: ClipboardList },
      { label: "Analytics", Icon: ChartColumn },
      { label: "Reports", Icon: FileText },
      { label: "Role Demo", Icon: Users },
    ],
  },
  { label: "Toolkit", Icon: FileText },
  { label: "Phone Directory", Icon: Phone },
  { label: "Development", Icon: FolderOpen },
];

const dock = [
  [
    ["Finder", Finder, true], ["Launchpad", Launchpad], ["Safari", Safari, true], ["Messages", Messages, true, "1,245"],
    ["Mail", Mail], ["Maps", Maps], ["Photos", Photos, true], ["FaceTime", FaceTime, false, "10"],
    ["Calendar", Calendar, true], ["Contacts", Contacts], ["Reminders", Reminders, false, "6"], ["Notes", Notes],
    ["Freeform", Freeform], ["Music", Music], ["TV", AppleTv], ["News", News], ["Keynote", Keynote],
    ["Numbers", Numbers], ["Pages", Pages], ["App Store", AppStore], ["System Settings", Settings, true, "1"],
    ["iPhone Mirroring", PhoneMirror], ["Feedback", Feedback],
  ],
  [
    ["Chrome Beta", ChromeBeta, true], ["Chrome", Chrome, true], ["TextEdit", TextEdit, true],
    ["Stickies", Stickies, true], ["Visual Studio Code", VsCode, true], ["Google Photos", GooglePhotos, true],
    ["Firefox", FirefoxDev, true], ["Cursor", Cursor, true], ["Word", Word, true], ["Preview", Preview, true],
    ["ChatGPT", ChatGpt, true],
  ],
  [["PDF document", PdfFile], ["Minimized window", MiniChrome], ["Minimized window 2", MiniChrome], ["Trash", Trash]],
];

function Browser() {
  return (
    <BrowserWindow>
      <TabStrip>
        <WindowControls>
          <Light $color="#ed6a5e" aria-label="Close" />
          <Light $color="#f4bf4f" aria-label="Minimize" />
          <Light $color="#61c554" aria-label="Zoom" />
          <Spacer />
          <IconButton $w={32} aria-label="Recent browsing"><FirefoxViewGlyph /></IconButton>
        </WindowControls>
        <Tabs>
          {tabs.map((t) => (
            <Tab key={t.title} $active={t.active} $icon={!!t.icon}>
              {t.icon}
              <span>{t.title}</span>
              <button aria-label={`Close ${t.title}`}><X size={24} strokeWidth={2} /></button>
            </Tab>
          ))}
        </Tabs>
        <IconButton $w={86} aria-label="New tab"><Plus size={34} strokeWidth={2} /></IconButton>
        <Spacer />
        <IconButton $w={32} aria-label="List all tabs"><ChevronDown size={38} strokeWidth={2} /></IconButton>
      </TabStrip>
      <NavBar>
        <IconButton aria-label="Back"><ArrowLeft size={38} /></IconButton>
        <IconButton aria-label="Forward"><ArrowRight size={38} /></IconButton>
        <IconButton aria-label="Reload"><RotateCw size={32} /></IconButton>
        <AddressBar>
          <Shield size={32} strokeWidth={2} />
          <Lock size={32} strokeWidth={2} />
          <AddressInput
            aria-label="Address"
            readOnly
            value="bb1d30f8-d852-4bae-abcd-b7c4521e3d85-00-x9tsn55inx51.spock.replit.dev"
          />
          <Star size={34} strokeWidth={2} />
        </AddressBar>
        <IconButton aria-label="Downloads"><Download size={34} strokeWidth={2} /></IconButton>
        <IconButton aria-label="Tools"><FaWrench size={27} /></IconButton>
        <IconButton aria-label="Account"><AccountGlyph /><AccountDot /></IconButton>
        <IconButton aria-label="Extensions"><ExtensionsGlyph /></IconButton>
        <IconButton aria-label="Menu"><Menu size={34} strokeWidth={2} /></IconButton>
      </NavBar>
      <BookmarkBar>
        {bookmarks.map(([name, icon]) => (
          <Bookmark key={name} href="#" $truncated={name.endsWith("…")}>{icon}{name}</Bookmark>
        ))}
        <Spacer />
        <ChevronsRight size={40} strokeWidth={2} />
        <Bookmark href="#">{folder}Other Bookmarks</Bookmark>
      </BookmarkBar>
      <Banner>
        <p>
          This is a temporary development preview, and these links are not for public use.{" "}
          <a href="#">Deploy your app</a> for secure sharing or use an invite link.
        </p>
        <IconButton $w={56} aria-label="Dismiss"><X size={34} strokeWidth={2} /></IconButton>
      </Banner>
      <MinutesPage />
      <BottomShade />
      <ScrollThumb />
    </BrowserWindow>
  );
}

function MinutesPage() {
  return (
    <Page>
      <PageHeader>
        <Brand><Sandwich size={50} />The Sandwich Project</Brand>
        <HeaderActions>
          <HeaderButton aria-label="Messages"><MessageCircle size={44} /></HeaderButton>
          <HeaderButton><LogOut size={36} />Logout</HeaderButton>
        </HeaderActions>
      </PageHeader>
      <PageBody>
        <Sidebar>
          <NavList>
            {nav.map(({ label, Icon, group, items }) => (
              <li key={label}>
                <NavLink href="#" $group={group}>
                  <Icon size={44} />
                  <span>{label}</span>
                  {group && (items ? <ChevronDown size={36} /> : <ChevronRight size={36} />)}
                </NavLink>
                {items && (
                  <SubList>
                    {items.map((s) => (
                      <li key={s.label}><SubLink href="#"><s.Icon size={36} />{s.label}</SubLink></li>
                    ))}
                  </SubList>
                )}
              </li>
            ))}
          </NavList>
          <SidebarFoot />
        </Sidebar>
        <Main>
          <Actions>
            <ActionButton>← Back to Meetings</ActionButton>
            <ActionButton $danger><Trash2 size={36} />Delete Minutes</ActionButton>
          </Actions>
          <Card>
            <CardTitle><FileText size={44} />Core Team Meeting- April 8</CardTitle>
            <Muted>Meeting Date: 4/7/2024</Muted>
            <Notice>
              <NoticeTitle><FileText size={44} />Document Content Extracted</NoticeTitle>
              <NoticeText>Content has been extracted and is displayed below</NoticeText>
            </Notice>
            <SectionTitle>Meeting Minutes Document</SectionTitle>
            <FileBox>Uploaded file: 20240408_TSP Meeting Agenda &amp; Notes(1).docx</FileBox>
          </Card>
        </Main>
      </PageBody>
    </Page>
  );
}

export default function App() {
  return (
    <Desktop>
      <Global />
      <StickyNote>
        <StickyLine>m/nicu</StickyLine>
        <StickyLine $last>git clone [https://githu</StickyLine>
      </StickyNote>
      <MenuBar>
        <MenuGroup>
          <AppleMark />
          <MenuItem $bold>Firefox Developer Edition</MenuItem>
          {menus.map((m) => <MenuItem key={m}>{m}</MenuItem>)}
        </MenuGroup>
        <StatusGroup>
          {statusItems.map(([name, w, icon]) => <StatusSlot key={name} $w={w}>{icon}</StatusSlot>)}
          <Battery>90%<BatteryGlyph /></Battery>
          <StatusSlot $w={26}><Search size={32} color={glyph} strokeWidth={2} /></StatusSlot>
          <StatusSlot $w={40}><ControlGlyph /></StatusSlot>
          <StatusSlot $w={26}><SiriGlyph /></StatusSlot>
          <Clock><span>Wed Jun 25</span><span>12:05 PM</span></Clock>
        </StatusGroup>
      </MenuBar>
      <Browser />
      <DockArea>
        <Dock>
          {dock.map((group, g) => (
            <React.Fragment key={g}>
              {g > 0 && <DockRule />}
              {group.map(([name, Icon, running, badge]) => (
                <DockItem key={name} aria-label={name}>
                  <Icon />
                  {running && <RunningDot />}
                  {badge && <Badge>{badge}</Badge>}
                </DockItem>
              ))}
            </React.Fragment>
          ))}
        </Dock>
      </DockArea>
    </Desktop>
  );
}
